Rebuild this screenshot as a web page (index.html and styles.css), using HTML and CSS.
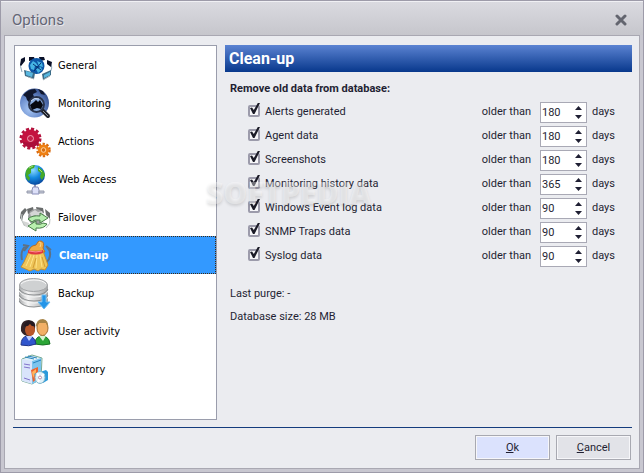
FILE: index.html
```html
<!DOCTYPE html>
<html lang="en">
<head>
  <meta charset="UTF-8">
  <meta name="viewport" content="width=device-width, initial-scale=1.0">
  <title>Options</title>
  <link rel="stylesheet" href="styles.css">
</head>
<body>
  <div class="window">
    <header class="titlebar">
      <h1>Options</h1>
      <button class="close" type="button" aria-label="Close">
        <svg width="14" height="12" viewBox="0 0 14 12"><path d="M3 2l8 8M11 2l-8 8" stroke="#63656f" stroke-width="3" stroke-linecap="round"/></svg>
      </button>
    </header>

    <form class="panel">
      <div class="main">
        <nav class="sidebar">
          <a href="#general">
            <svg class="icon" viewBox="0 0 36 38">
              <path d="M4 14q-3 5 0 11M32 16q4 5-1 10" fill="none" stroke="#8fa8bb" stroke-width="1"/>
              <path d="M3 12l4-2v4l-4 5-1-1zM11 10l5 0 1 3-6 1zM21 10l5 0 1 3-5 1zM29 13l5 2-1 5-4-3z" fill="#0a1028"/>
              <circle cx="18.5" cy="19" r="8" fill="#0c56a6"/>
              <path d="M12 18l3-4 3 2 2 3-3 0-1 4-3-1zM19 14l5 2 1 4-4-1zM18 22l5-2 1 3-4 3z" fill="#45b4e3"/>
              <path d="M15 17l8 6M23 16l-7 8" stroke="#08306f" stroke-width="1"/>
              <path d="M6 23l11 3-1 6-9-3zM24 27l9-4 0 5-8 5z" fill="#3c6c88"/>
              <path d="M8 24l7 2-1 4-6-2zM26 28l6-3 0 3-6 3z" fill="#58b7df"/>
              <path d="M10 30l6 2M25 33l7-4" stroke="#a3b0b8"/>
            </svg>
            General
          </a>
          <a href="#monitoring">
            <svg class="icon" viewBox="0 0 36 38">
              <defs><radialGradient id="mon" cx=".35" cy=".7" r=".8"><stop offset="0" stop-color="#a9c8f5"/><stop offset=".55" stop-color="#6688c9"/><stop offset="1" stop-color="#2b437f"/></radialGradient></defs>
              <circle cx="16.5" cy="18" r="14.5" fill="url(#mon)"/>
              <path d="M5 10q5-6 12-6l2 3-4 2 1 3-3 2-1 4-3-3-1-3zM20 4l5 2 2 4-4-1z" fill="#10172d"/>
              <path d="M24 25l6 6" stroke="#20232b" stroke-width="4" stroke-linecap="round"/>
              <path d="M25 26l5 5" stroke="#8b929d" stroke-width="1"/>
              <circle cx="18.500" cy="19.500" r="7.500" fill="#86a9dd" stroke="#29334b" stroke-width="2"/>
              <path d="M12 20l4-3 2-2 2 2 2-2 3 5-2 4-4-1-5 2z" fill="#05070f"/>
              <path d="M13 16q3-4 8-2" fill="none" stroke="#cddcf3"/>
            </svg>
            Monitoring
          </a>
          <a href="#actions">
            <svg class="icon" viewBox="0 0 36 38">
              <circle cx="12.500" cy="15.500" r="9.500" fill="none" stroke="#b4123d" stroke-width="3" stroke-dasharray="3 2"/>
              <circle cx="12.500" cy="15.500" r="9" fill="#c4123f"/>
              <path d="M4 18q8 4 17-2 0 8-8 8-7 0-9-6z" fill="#ab0e3a"/>
              <circle cx="12.500" cy="15.500" r="3" fill="#c51e48" stroke="#f1a3b5" stroke-width="1"/>
              <circle cx="25.500" cy="27" r="6" fill="none" stroke="#d86a10" stroke-width="2.500" stroke-dasharray="2.300 1.500"/>
              <circle cx="25.500" cy="27" r="5.500" fill="#ee8014"/>
              <circle cx="25.500" cy="27" r="2.300" fill="#d66c10" stroke="#ffd19c" stroke-width="1"/>
            </svg>
            Actions
          </a>
          <a href="#web">
            <svg class="icon" viewBox="0 0 36 38">
              <defs><radialGradient id="web" cx=".4" cy=".25" r=".8"><stop offset="0" stop-color="#8fdcff"/><stop offset=".5" stop-color="#1489e0"/><stop offset="1" stop-color="#073f95"/></radialGradient></defs>
              <circle cx="17" cy="14" r="10" fill="url(#web)"/>
              <path d="M9 8q3-4 8-4l-1 3-3 1 0 4-3 2 2 3-1 3q-5-4-3-10zM20 6q6 3 7 8l-3 5-2-3 1-4-3-2z" fill="#46aa28"/>
              <path d="M11 7l4-2M21 8l3 3" stroke="#a6e074"/>
              <path d="M17 24v4" stroke="#8c90b4" stroke-width="2"/>
              <path d="M14 29l1-3h5l1 3v4h-7z" fill="#dcdff8" stroke="#898eb9" stroke-width="1"/>
              <path d="M9 30h5v2h-5zM21 30h5v2h-5z" fill="#c6cad9" stroke="#959aac" stroke-width="1"/>
            </svg>
            Web Access
          </a>
          <a href="#failover">
            <svg class="icon" viewBox="0 0 36 38">
              <path d="M3 13l4-4 2 2-4 6-1 5-2-3zM9 10l6-2 1 5-6 2zM18 8l7 1 1 5-7-2zM27 10l5 4 0 6-4-4z" fill="#696c6c"/>
              <circle cx="18" cy="18" r="8" fill="#9c9f9f"/>
              <path d="M12 14l5-3 3 2 4-1 2 5-5 2-4-3-4 2zM5 22l6 2-1 5-5-3z" fill="#d4d6d5"/>
              <path d="M4 15q-2 6 3 12M32 20q1 5-4 9" fill="none" stroke="#bcc2c0"/>
              <path d="M10 20q4-4 12-3v-3l8 5-8 5v-3q-6-1-8 2z" fill="#b5edae" stroke="#477d48" stroke-width="1"/>
              <path d="M29 25q-3 5-11 4v3l-8-5 8-5v3q5 1 7-1z" fill="#b9f0af" stroke="#477d48" stroke-width="1"/>
            </svg>
            Failover
          </a>
          <a href="#cleanup" class="selected" aria-current="page">
            <svg class="icon" viewBox="0 0 36 38">
              <path d="M8 9q-6 4-4 14M5 8l5 1-4 5M29 10q5 5 2 12l-3 4M28 9l5 4" fill="none" stroke="#5d7185" stroke-width="2"/>
              <path d="M18 8q2-5 5-4 4 1 2 7l2 4-16 0q0-6 7-7z" fill="#f0ab45" stroke="#b66d25" stroke-width="1"/>
              <path d="M21 5q3 0 1 5" fill="none" stroke="#ffd78b"/>
              <path d="M11 14h14l5 14-3 5-4-1-3 2-4-2-4 2-9-4 3-5z" fill="#eec55a" stroke="#c68d2c" stroke-width="1"/>
              <path d="M13 18L8 29M16 18l-4 12M19 18l-1 13M22 18l2 12" fill="none" stroke="#ffe387" stroke-width="1"/>
              <path d="M18 21l-3 10M24 20l3 10" stroke="#d39d34" stroke-width="1"/>
              <path d="M10 13q7 3 15 0v3q-8 3-15 0z" fill="#df3844"/>
              <path d="M11 14q7 2 13 0" fill="none" stroke="#ff8b91"/>
            </svg>
            Clean-up
          </a>
          <a href="#backup">
            <svg class="icon" viewBox="0 0 36 38">
              <defs><linearGradient id="disk"><stop offset="0" stop-color="#a5a7a9"/><stop offset=".3" stop-color="#f5f5f5"/><stop offset="1" stop-color="#a2a4a6"/></linearGradient></defs>
              <path d="M1 10v17q3 5 15 5 11 0 14-5V10z" fill="url(#disk)"/>
              <path d="M1 14q4 6 15 6t14-6M1 20q4 6 15 6t14-6M1 26q4 6 15 6 7 0 11-3" fill="none" stroke="#8b8e90" stroke-width="1"/>
              <path d="M1 16q4 6 15 6t14-6M1 22q4 6 15 6t14-6" fill="none" stroke="#f4f5f5" stroke-width="1"/>
              <ellipse cx="15.500" cy="10" rx="14" ry="6.500" fill="#cfd1d2" stroke="#a2a4a6" stroke-width="1"/>
              <path d="M3 9q4-4 13-4 9 0 12 4" fill="none" stroke="#fafafa"/>
              <path d="M24 20h4v7h4l-6 7-6-7h4z" fill="#2495e8" stroke="#6fbdf0" stroke-width="1"/>
            </svg>
            Backup
          </a>
          <a href="#users">
            <svg class="icon" viewBox="0 0 36 38">
              <path d="M17 31q0-7 6-8h4q5 3 5 8-7 2-15 0z" fill="#2ba536" stroke="#187324" stroke-width="1"/>
              <path d="M21 23l4 5 3-5z" fill="#d8f4d1"/>
              <ellipse cx="24.500" cy="15" rx="5.500" ry="7.500" fill="#f2b066" stroke="#a56e31" stroke-width="1"/>
              <path d="M18 14q0-8 7-8 6 1 5 9l-2-5-7 0z" fill="#a68345"/>
              <path d="M3 32q0-8 6-9h4q5 3 5 8-7 3-15 1z" fill="#3156cd" stroke="#203489" stroke-width="1"/>
              <path d="M8 23l3 5 4-5z" fill="#bfcfff"/>
              <path d="M3 18q-1-11 8-11 8 1 6 9-1 6-6 7-6 0-8-5z" fill="#342326"/>
              <ellipse cx="12" cy="17" rx="5" ry="6" fill="#b9572a"/>
              <path d="M6 13q5 1 6-3 1 4 5 3-1-5-6-5-4 0-5 5z" fill="#261a20"/>
            </svg>
            User activity
          </a>
          <a href="#inventory">
            <svg class="icon" viewBox="0 0 36 38">
              <path d="M4 8l10-4 10 3-1 21-9 5-10-3z" fill="#dff1fa" stroke="#75a994" stroke-width="1"/>
              <path d="M14 10l9-3v22l-9 4z" fill="#7cc5ee"/>
              <path d="M4 8l10 2v23l-10-3z" fill="#d9e4fb"/>
              <path d="M6 13l6 1M6 16l6 1M6 27l6 2" stroke="#8172cb" stroke-width="1"/>
              <path d="M7 6l9 2M10 5l9 2M15 12l8-3" stroke="#2782bd" stroke-width="1"/>
              <path d="M13 19l7-3 0 11-5 4z" fill="#ed622c"/>
              <path d="M14 21l4-3v3l-3 6z" fill="#ffb45d"/>
              <path d="M16 23l12-4 2 2v8l-5 3z" fill="#2b9adb"/>
              <ellipse cx="22" cy="26.500" rx="5" ry="6" fill="#e0f2fa" stroke="#86b8cc" stroke-width="1"/>
              <path d="M19 22l3 5 4-4M20 31l2-4" fill="none" stroke="#fff" stroke-width="2"/>
              <circle cx="22" cy="26.500" r="1.500" fill="#fff" stroke="#b889a4" stroke-width="1"/>
            </svg>
            Inventory
          </a>
        </nav>

        <section class="content">
          <h2>Clean-up</h2>
          <h3>Remove old data from database:</h3>

          <div class="rows">
            <div class="row">
              <label class="check"><input type="checkbox" checked>Alerts generated</label>
              <label for="alerts">older than</label>
              <div class="spin">
                <input type="number" id="alerts" value="180">
                <div class="arrows"><button type="button" aria-label="More"></button><button type="button" aria-label="Less"></button></div>
              </div>
              <span class="unit">days</span>
            </div>
            <div class="row">
              <label class="check"><input type="checkbox" checked>Agent data</label>
              <label for="agent">older than</label>
              <div class="spin">
                <input type="number" id="agent" value="180">
                <div class="arrows"><button type="button" aria-label="More"></button><button type="button" aria-label="Less"></button></div>
              </div>
              <span class="unit">days</span>
            </div>
            <div class="row">
              <label class="check"><input type="checkbox" checked>Screenshots</label>
              <label for="screens">older than</label>
              <div class="spin">
                <input type="number" id="screens" value="180">
                <div class="arrows"><button type="button" aria-label="More"></button><button type="button" aria-label="Less"></button></div>
              </div>
              <span class="unit">days</span>
            </div>
            <div class="row">
              <label class="check"><input type="checkbox" checked>Monitoring history data</label>
              <label for="history">older than</label>
              <div class="spin">
                <input type="number" id="history" value="365">
                <div class="arrows"><button type="button" aria-label="More"></button><button type="button" aria-label="Less"></button></div>
              </div>
              <span class="unit">days</span>
            </div>
            <div class="row">
              <label class="check"><input type="checkbox" checked>Windows Event log data</label>
              <label for="events">older than</label>
              <div class="spin">
                <input type="number" id="events" value="90">
                <div class="arrows"><button type="button" aria-label="More"></button><button type="button" aria-label="Less"></button></div>
              </div>
              <span class="unit">days</span>
            </div>
            <div class="row">
              <label class="check"><input type="checkbox" checked>SNMP Traps data</label>
              <label for="snmp">older than</label>
              <div class="spin">
                <input type="number" id="snmp" value="90">
                <div class="arrows"><button type="button" aria-label="More"></button><button type="button" aria-label="Less"></button></div>
              </div>
              <span class="unit">days</span>
            </div>
            <div class="row">
              <label class="check"><input type="checkbox" checked>Syslog data</label>
              <label for="syslog">older than</label>
              <div class="spin">
                <input type="number" id="syslog" value="90">
                <div class="arrows"><button type="button" aria-label="More"></button><button type="button" aria-label="Less"></button></div>
              </div>
              <span class="unit">days</span>
            </div>
          </div>

          <div class="info">
            <p>Last purge: -</p>
            <p>Database size: 28 MB</p>
          </div>
        </section>
      </div>

      <footer class="buttons">
        <button type="button" class="btn ok"><u>O</u>k</button>
        <button type="button" class="btn"><u>C</u>ancel</button>
      </footer>
    </form>

    <div class="watermark">SOFTPEDIA</div>
  </div>
</body>
</html>
```

FILE: styles.css
```css
* {
  box-sizing: border-box;
}

body {
  margin: 0;
  font-family: Roboto, "Liberation Sans", sans-serif;
  font-size: 11px;
  line-height: 20px;
  color: #1f1f33;
}

h1, h2, h3, p {
  margin: 0;
}

.window {
  position: relative;
  display: flex;
  flex-direction: column;
  min-height: 100vh;
  padding: 0 3px 3px;
  border: 1px solid #9d9ba9;
  background: #c8c7d0;
}

/* title bar */
.titlebar {
  display: flex;
  align-items: center;
  justify-content: space-between;
  height: 34px;
  margin: 0 -3px;
  padding: 3px 15px 0 11px;
  border-top: 1px solid #f0f0f4;
  background: linear-gradient(#dadae0, #c6c6cc);
}

.titlebar h1 {
  font-size: 15px;
  font-weight: normal;
  color: #646675;
  text-shadow: 1px 1px 0 #e8e8ee;
}

.close {
  display: flex;
  padding: 0;
  border: none;
  background: none;
}

.panel {
  flex: 1;
  display: flex;
  flex-direction: column;
  padding: 9px 7px 8px 8px;
  border: 1px solid #a9a8b2;
  background: #ebecf0;
}

.main {
  flex: 1;
  display: flex;
  gap: 8px;
  padding: 0 0 7px 1px;
}

/* left list */
.sidebar {
  flex: 0 0 203px;
  border: 1px solid #9a9dac;
  background: #fff;
  font-family: "DejaVu Sans Condensed", "DejaVu Sans", sans-serif;
}

.sidebar a {
  display: flex;
  align-items: center;
  gap: 4px;
  height: 38px;
  padding: 1px 0 0 3px;
  color: #000;
  text-decoration: none;
}

.sidebar a.selected {
  padding-left: 2px;
  gap: 5px;
  border: 1px dotted #3c2a14;
  background: #3399ff;
  color: #fff;
  font-weight: bold;
}

.icon {
  flex: none;
  width: 36px;
  height: 38px;
}

/* right side */
.content {
  flex: 1;
}

.content h2 {
  height: 27px;
  padding: 0 4px;
  background: linear-gradient(#5b83d2, #08388c);
  color: #fff;
  font-size: 16px;
  font-weight: bold;
  line-height: 28px;
}

.content h3 {
  padding: 7px 5px 3px;
  font-size: 11px;
  font-weight: bold;
}

.rows {
  display: flex;
  flex-direction: column;
  gap: 3px;
  padding: 0 15px 0 23px;
}

.row {
  display: flex;
  height: 21px;
}

.check {
  flex: 1;
  display: flex;
  gap: 5px;
}

.check input {
  appearance: none;
  position: relative;
  width: 12px;
  height: 12px;
  margin: 3px 0 0;
  border: 2px solid #9c9bab;
  border-radius: 2px;
  background: #f6f6f9;
}

.check input:checked::after {
  content: "";
  position: absolute;
  left: 0;
  top: -4px;
  width: 10px;
  height: 11px;
  background: #1b1b27;
  clip-path: polygon(0 45%, 20% 40%, 38% 64%, 78% 0, 100% 0, 45% 100%, 30% 100%);
}

.spin {
  display: flex;
  width: 47px;
  height: 21px;
  margin: 0 5px 0 9px;
  border: 1px solid #a9a9b5;
  background: #fff;
}

.spin input {
  flex: 1;
  min-width: 0;
  padding: 0 0 0 1px;
  border: none;
  background: none;
  color: inherit;
  font: inherit;
  appearance: textfield;
}

.spin input::-webkit-inner-spin-button {
  display: none;
}

.arrows {
  display: flex;
  flex-direction: column;
  justify-content: center;
  gap: 5px;
  padding-right: 4px;
}

.arrows button {
  width: 7px;
  height: 4px;
  padding: 0;
  border: none;
  background: #1f1f33;
  clip-path: polygon(50% 0, 100% 100%, 0 100%);
}

.arrows button:last-child {
  clip-path: polygon(0 0, 100% 0, 50% 100%);
}

.unit {
  width: 25px;
}

.info {
  display: flex;
  flex-direction: column;
  gap: 3px;
  padding: 17px 5px 0;
}

/* bottom */
.buttons {
  display: flex;
  justify-content: flex-end;
  gap: 6px;
  padding: 7px 1px 0 0;
  border-top: 1px solid #143c7d;
}

.btn {
  width: 75px;
  height: 25px;
  padding: 0;
  border: 1px solid #a8a9b1;
  box-shadow: inset 0 0 0 1px #f6f6f9;
  background: #e2e3e8;
  color: #1f1f33;
  font: inherit;
}

.btn.ok {
  background: #dbe2fd;
}

.watermark {
  position: absolute;
  left: 205px;
  top: 172px;
  font-family: "Open Sans", sans-serif;
  font-size: 30px;
  font-weight: 800;
  line-height: 40px;
  color: rgba(255, 255, 255, 0.4);
  text-shadow: 0 2px 3px rgba(0, 0, 0, 0.12);
  pointer-events: none;
}
```
